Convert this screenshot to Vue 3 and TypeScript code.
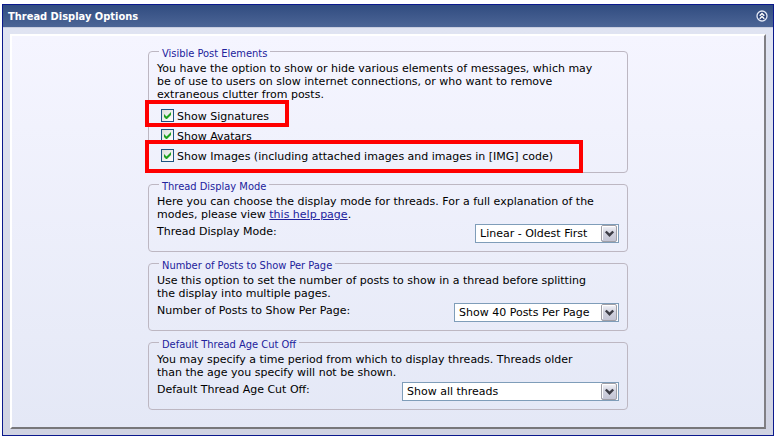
<script setup lang="ts">
import { reactive, ref } from 'vue'

interface PostElement {
  id: string
  label: string
  checked: boolean
  mark?: string
}

interface DisplayOption {
  id: string
  title: string
  lines: string[]
  link?: string
  size: string
  value: string
  choices: string[]
}

const collapsed = ref(false)

const elements = reactive<PostElement[]>([
  { id: 'signatures', label: 'Show Signatures', checked: true, mark: 'mark-short' },
  { id: 'avatars', label: 'Show Avatars', checked: true },
  {
    id: 'images',
    label: 'Show Images (including attached images and images in [IMG] code)',
    checked: true,
    mark: 'mark-long',
  },
])

const options = reactive<DisplayOption[]>([
  {
    id: 'mode',
    title: 'Thread Display Mode',
    lines: [
      'Here you can choose the display mode for threads. For a full explanation of the',
      'modes, please view ',
    ],
    link: 'this help page',
    size: 'small',
    value: 'Linear - Oldest First',
    choices: ['Linear - Oldest First', 'Linear - Newest First', 'Hybrid', 'Threaded'],
  },
  {
    id: 'posts',
    title: 'Number of Posts to Show Per Page',
    lines: [
      'Use this option to set the number of posts to show in a thread before splitting',
      'the display into multiple pages.',
    ],
    size: 'medium',
    value: 'Show 40 Posts Per Page',
    choices: ['Show 10 Posts Per Page', 'Show 20 Posts Per Page', 'Show 40 Posts Per Page'],
  },
  {
    id: 'age',
    title: 'Default Thread Age Cut Off',
    lines: [
      'You may specify a time period from which to display threads. Threads older',
      'than the age you specify will not be shown.',
    ],
    size: 'large',
    value: 'Show all threads',
    choices: ['Show all threads', 'Show threads from last month', 'Show threads from last year'],
  },
])
</script>

<template>
  <section class="board">
    <header class="bar">
      <h1>Thread Display Options</h1>
      <button type="button" aria-label="Collapse" @click="collapsed = !collapsed">
        <svg viewBox="0 0 12 12" width="12" height="12">
          <circle cx="6" cy="6" r="5" fill="#2c447a" stroke="#e4e9f6" stroke-width="1.3" />
          <path d="M3.7 5.7 6 3.4l2.3 2.3M3.7 8.8 6 6.5l2.3 2.3" fill="none" stroke="#fff" stroke-width="1.4" />
        </svg>
      </button>
    </header>

    <div class="surround">
      <form v-show="!collapsed" class="panel" @submit.prevent>
        <fieldset>
          <legend>Visible Post Elements</legend>
          <p>
            You have the option to show or hide various elements of messages, which may<br />
            be of use to users on slow internet connections, or who want to remove<br />
            extraneous clutter from posts.
          </p>
          <div class="checks">
            <div v-for="el in elements" :key="el.id" class="check-row">
              <span class="box">
                <input :id="el.id" v-model="el.checked" type="checkbox" />
                <svg v-if="el.checked" viewBox="0 0 13 13" width="13" height="13">
                  <path d="M3 5v3l2 2h1l4-4V3L5.500 7.500z" fill="#21a121" />
                </svg>
              </span>
              <label :for="el.id">{{ el.label }}</label>
              <span v-if="el.mark" class="mark" :class="el.mark"></span>
            </div>
          </div>
        </fieldset>

        <fieldset v-for="opt in options" :key="opt.id">
          <legend>{{ opt.title }}</legend>
          <p>
            {{ opt.lines[0] }}<br />
            {{ opt.lines[1] }}<template v-if="opt.link"><a href="#help">{{ opt.link }}</a>.</template>
          </p>
          <div class="choice">
            <label :for="opt.id">{{ opt.title }}:</label>
            <span class="drop" :class="opt.size">
              <select :id="opt.id" v-model="opt.value">
                <option v-for="c in opt.choices" :key="c">{{ c }}</option>
              </select>
              <svg viewBox="0 0 17 17" width="17" height="17">
                <defs>
                  <linearGradient :id="opt.id + '-face'" x1="0" y1="0" x2="0" y2="1">
                    <stop offset="0" stop-color="#f6f6fa" />
                    <stop offset="0.45" stop-color="#d2d3df" />
                    <stop offset="1" stop-color="#c3c4d4" />
                  </linearGradient>
                </defs>
                <rect x="0.500" y="0.500" width="15" height="16" rx="1.500" :fill="`url(#${opt.id}-face)`" stroke="#a09fa6" />
                <path d="M1.500 15V1.500H14" fill="none" stroke="#fff" />
                <path d="M4.800 6.500 8.500 10.200l3.700-3.700" fill="none" stroke="#3d3d46" stroke-width="2.400" />
              </svg>
            </span>
          </div>
        </fieldset>
      </form>
    </div>
  </section>
</template>

<style>
body {
  margin: 0;
  background: #fff;
}
</style>

<style scoped>
.board {
  margin: 4px 0 0 2px;
  border: 1px solid #0b198c;
  font: 11px/13px Verdana, "DejaVu Sans", sans-serif;
  color: #000;
}
.bar {
  display: flex;
  align-items: center;
  justify-content: space-between;
  height: 22px;
  padding: 0 5px;
  border-bottom: 1px solid #c9cee0;
  background: linear-gradient(#314c80, #4c6596);
}
h1 {
  margin: 0;
  padding-top: 1px;
  font: bold 11px/16px Tahoma, "DejaVu Sans Condensed", "DejaVu Sans", sans-serif;
  color: #fff;
}
.bar button {
  display: flex;
  padding: 0;
  border: 0;
  background: none;
}
.surround {
  padding: 6px 7px;
  background: linear-gradient(#e0e4f2, #d0d3e2);
}
.panel {
  display: flex;
  flex-direction: column;
  align-items: center;
  gap: 5px;
  padding: 9px 16px 17px;
  border: 2px solid;
  border-color: #fff #807f84 #77777a #fff;
  background: linear-gradient(#f5f5ff, #e4e8f6);
}
fieldset {
  box-sizing: border-box;
  width: 100%;
  max-width: 480px;
  min-width: 0;
  margin: 0;
  padding: 4px 8px 7px;
  border: 1px solid #bdb7c2;
  border-radius: 4px;
}
legend {
  box-sizing: border-box;
  height: 13px;
  margin-left: 2px;
  padding: 2px 3px 0;
  font: 11px/13px Tahoma, "DejaVu Sans Condensed", "DejaVu Sans", sans-serif;
  color: #22229c;
}
p {
  margin: 0;
  white-space: nowrap;
}
a {
  color: #22229c;
}
.checks {
  padding-top: 4px;
}
.check-row {
  position: relative;
  display: flex;
  align-items: center;
  gap: 3px;
  height: 20px;
  padding-left: 4px;
  white-space: nowrap;
}
.checks label {
  padding-top: 2px;
}
.box {
  position: relative;
  display: flex;
}
.box input {
  appearance: none;
  width: 13px;
  height: 13px;
  margin: 0;
  border: 1px solid #1d5281;
  background: linear-gradient(135deg, #dddeda, #fff);
}
.box svg {
  position: absolute;
  inset: 0;
  pointer-events: none;
}
.mark {
  position: absolute;
  z-index: 1;
  top: -5px;
  left: -12px;
  box-sizing: border-box;
  border: 4px solid #f00;
  pointer-events: none;
}
.mark-short {
  width: 144px;
  height: 27px;
}
.mark-long {
  width: 438px;
  height: 33px;
}
.choice {
  display: flex;
  align-items: flex-start;
  justify-content: space-between;
  padding: 3px 0 1px;
}
.choice label {
  padding-top: 1px;
}
.drop {
  position: relative;
  display: flex;
}
.small {
  width: 144px;
}
.medium {
  width: 165px;
}
.large {
  width: 217px;
}
select {
  appearance: none;
  box-sizing: border-box;
  width: 100%;
  height: 19px;
  margin: 0;
  padding: 0 17px 0 4px;
  border: 1px solid #7f9db9;
  border-radius: 0;
  background: #fff;
  font: inherit;
  color: #000;
}
.drop svg {
  position: absolute;
  top: 1px;
  right: 1px;
  pointer-events: none;
}
</style>
